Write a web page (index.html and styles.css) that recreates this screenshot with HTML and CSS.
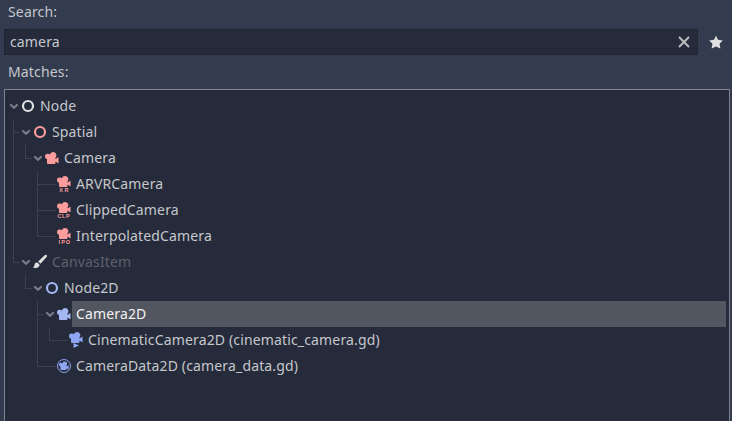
FILE: index.html
```html
<!DOCTYPE html>
<html lang="en">
<head>
<meta charset="utf-8">
<title>Create New Node</title>
<link rel="stylesheet" href="styles.css">
</head>
<body>
<svg class="defs" aria-hidden="true">
  <symbol id="arrow" viewBox="0 0 12 12"><path d="M3 5l3 2.8L9 5" fill="none" stroke="#7b7e86" stroke-width="2.2" stroke-linecap="round" stroke-linejoin="round"/></symbol>
  <symbol id="ring" viewBox="0 0 16 16"><circle cx="8" cy="8" r="5" fill="none" stroke="currentColor" stroke-width="2.2"/></symbol>
  <symbol id="camera" viewBox="0 0 16 16"><path fill="currentColor" d="M9 2a3.3 3.3 0 0 0-3.2 2.5A2.7 2.7 0 0 0 3.6 3.7 2.7 2.7 0 0 0 1 6.4a2.8 2.8 0 0 0 2 2.7V13a1 1 0 0 0 1 1h6.5a1 1 0 0 0 1-1v-1.5l3 2V7l-3 2V7.6A3.3 3.3 0 0 0 9 2z"/></symbol>
  <symbol id="camera-small" viewBox="0 0 16 16"><path fill="currentColor" d="M9 0a3.2 3.2 0 0 0-3.1 2.3A2.7 2.7 0 0 0 3.7 1.6 2.6 2.6 0 0 0 1 4.2a2.7 2.7 0 0 0 2 2.6V10a1 1 0 0 0 1 1h6.5a1 1 0 0 0 1-1V8.6l3 1.9V4.6l-3 2V5.3A3.2 3.2 0 0 0 9 0z"/></symbol>
</svg>
<main class="dialog">
  <label class="label" for="search">Search:</label>
  <div class="search-row">
    <div class="field">
      <input id="search" type="text" value="camera">
      <svg class="icon" viewBox="0 0 16 16"><path d="M3 3l10 10m0-10l-10 10" fill="none" stroke="#b9bbbf" stroke-width="2"/></svg>
    </div>
    <svg class="icon star" viewBox="0 0 16 16"><path fill="#e0e0e0" d="M8 1.7l2 4.1 4.8.7-3.3 3.2.9 4.8L8 12.5l-4.4 2 .9-4.8L1.2 6.5 6 5.8z"/></svg>
  </div>
  <div class="label matches">Matches:</div>
  <div class="tree">
    <div class="row"><svg class="arrow"><use href="#arrow"/></svg><svg class="icon node"><use href="#ring"/></svg><span class="name">Node</span></div>
    <ul>
      <li>
        <div class="row"><svg class="arrow"><use href="#arrow"/></svg><svg class="icon spatial"><use href="#ring"/></svg><span class="name">Spatial</span></div>
        <ul>
          <li>
            <div class="row"><svg class="arrow"><use href="#arrow"/></svg><svg class="icon spatial"><use href="#camera"/></svg><span class="name">Camera</span></div>
            <ul>
              <li class="leaf"><div class="row"><svg class="icon spatial" viewBox="0 0 16 16"><use href="#camera-small"/><text x="3.2 8.6" y="16">XR</text></svg><span class="name">ARVRCamera</span></div></li>
              <li class="leaf"><div class="row"><svg class="icon spatial" viewBox="0 0 16 16"><use href="#camera-small"/><text x="1.6 6.1 10" y="16">CLP</text></svg><span class="name">ClippedCamera</span></div></li>
              <li class="leaf"><div class="row"><svg class="icon spatial" viewBox="0 0 16 16"><use href="#camera-small"/><text x="2.6 5.3 9.7" y="16">IPO</text></svg><span class="name">InterpolatedCamera</span></div></li>
            </ul>
          </li>
        </ul>
      </li>
      <li>
        <div class="row disabled"><svg class="arrow"><use href="#arrow"/></svg><svg class="icon node" viewBox="0 0 16 16"><path fill="currentColor" d="M14.6 1.1c-.6-.5-1.3-.3-1.9.2L6.2 7.5l2.3 2.3 6.1-6.7c.6-.7.6-1.4 0-2zM5.4 8.5c-1.9-.2-2.9 1-2.9 2.5 0 1.2-.6 2.1-1.6 2.5 2.7 1.3 7 .4 6.6-2.9z"/></svg><span class="name">CanvasItem</span></div>
        <ul>
          <li>
            <div class="row"><svg class="arrow"><use href="#arrow"/></svg><svg class="icon flat"><use href="#ring"/></svg><span class="name">Node2D</span></div>
            <ul>
              <li>
                <div class="row selected"><svg class="arrow"><use href="#arrow"/></svg><svg class="icon flat"><use href="#camera"/></svg><span class="name">Camera2D</span></div>
                <ul>
                  <li class="leaf"><div class="row"><svg class="icon script" viewBox="0 0 16 16"><use href="#camera-small"/><path fill="currentColor" d="M5.5 11l5.5 2.4L5.5 16z"/></svg><span class="name">CinematicCamera2D (cinematic_camera.gd)</span></div></li>
                </ul>
              </li>
              <li class="leaf"><div class="row"><svg class="icon script" viewBox="0 0 16 16"><circle cx="8" cy="8" r="6.5" fill="none" stroke="currentColor" stroke-width="1"/><use href="#camera" x="2.2" y="2" width="11.5" height="11.5"/></svg><span class="name">CameraData2D (camera_data.gd)</span></div></li>
            </ul>
          </li>
        </ul>
      </li>
    </ul>
  </div>
</main>
</body>
</html>
```

FILE: styles.css
```css
* { box-sizing: border-box; }

body {
  margin: 0;
  height: 421px;
  overflow: hidden;
  background: #333b4f;
  color: #c5c7cb;
  font: 14px/26px "Noto Sans", sans-serif;
  letter-spacing: 0.15px;
}

.defs { position: absolute; width: 0; height: 0; }

.dialog {
  display: flex;
  flex-direction: column;
  height: 421px;
  padding: 0 2px 0 4px;
}

.label { height: 29px; padding-left: 4px; line-height: 24px; }

.matches { height: 34px; line-height: 34px; }

.search-row { display: flex; align-items: center; height: 26px; }

.field {
  display: flex;
  align-items: center;
  width: 694px;
  height: 26px;
  padding: 0 5px;
  background: #262b3b;
  border: 1px solid #202532;
}

.field input {
  flex: 1;
  min-width: 0;
  height: 24px;
  padding: 0;
  border: 0;
  outline: 0;
  background: none;
  color: inherit;
  font: inherit;
  letter-spacing: inherit;
}

.icon { flex: none; width: 16px; height: 16px; }

.star { margin-left: 10px; }

.tree {
  flex: 1;
  padding: 3px 3px 0;
  background: #262b3b;
  border: 1px solid #7f858f;
  border-bottom: 0;
}

.tree ul {
  margin: 0;
  padding: 0 0 0 12px;
  list-style: none;
}

.tree li { position: relative; }

.tree li::before,
.tree li::after {
  content: "";
  position: absolute;
  left: -7px;
  background: #3c414e;
}

.tree li::before { top: 0; width: 1px; height: 100%; }

.tree li:last-child::before { height: 14px; }

.tree li::after { top: 13px; width: 7px; height: 1px; }

.tree li.leaf::after { width: 19px; }

.row { display: flex; align-items: center; height: 26px; }

.leaf > .row { padding-left: 12px; }

.arrow { flex: none; width: 12px; height: 12px; }

.name { flex: 1; height: 26px; padding-left: 4px; white-space: nowrap; }

.disabled .name { color: #5d616c; }

.selected .name { background: #525661; color: #f2f2f3; }

.node { color: #e0e0e0; }
.spatial { color: #fc9c9c; }
.flat { color: #a5b7f3; }
.script { color: #8da5f3; }

.icon text {
  fill: currentColor;
  font: bold 5.5px "Liberation Sans", sans-serif;
  letter-spacing: 0;
}
```
